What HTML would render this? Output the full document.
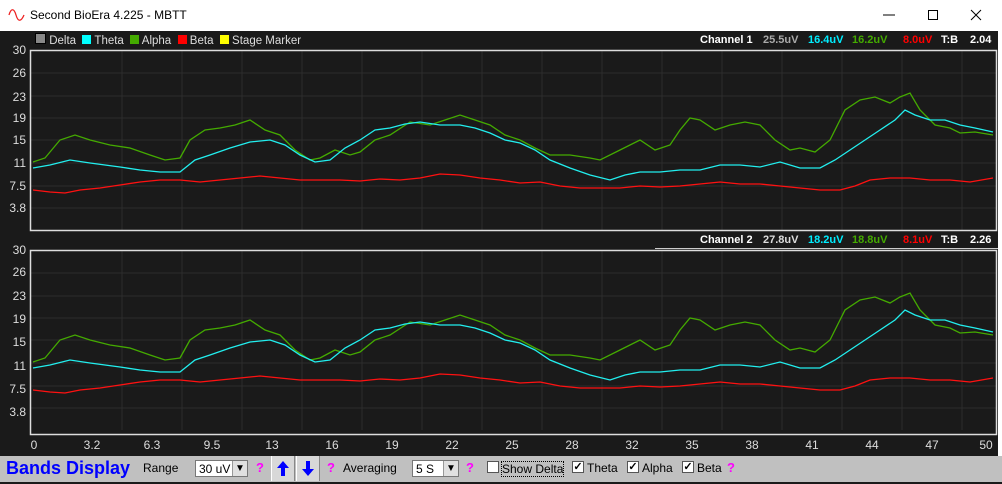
<!DOCTYPE html>
<html><head><meta charset="utf-8"><style>
body{margin:0;width:1002px;height:482px;overflow:hidden;background:#1a1a1a;font-family:"Liberation Sans",sans-serif;position:relative}
.t{position:absolute;white-space:nowrap}
.tb{position:absolute;left:0;top:0;width:1002px;height:31px;background:#fff}
.lab{color:#ddd;font-size:12px}
.yl{position:absolute;color:#ddd;font-size:12px;width:26px;text-align:right;left:0}
.hd{font-size:11px;font-weight:bold;top:0}
.bar{position:absolute;left:0;top:456px;width:1002px;height:26px;background:#c0c0c0;font-size:12px;color:#000}
.sel{position:absolute;top:4px;height:17px;background:#fff;border:1px solid #777;font-size:12px;line-height:17px;padding-left:3px;box-sizing:border-box}
.dd{position:absolute;right:0;top:0;width:14px;height:15px;background:#e0e0e0;border-left:1px solid #999;text-align:center;line-height:15px;font-size:10px}
.q{position:absolute;color:#f0f;font-weight:bold;font-size:13px;top:4px}
.cb{position:absolute;top:5px;width:12px;height:12px;background:#fff;border:1px solid #555;box-sizing:border-box;font-size:11px;line-height:10px;text-align:center;font-weight:bold}
.ab{position:absolute;top:0;width:24px;height:25px;background:#d8d8d8;border-left:1px solid #fff;border-right:1px solid #888;box-sizing:border-box}
</style></head><body>
<div class="tb">
<svg style="position:absolute;left:8px;top:8px" width="18" height="14"><path d="M1 7 C3 0,6 0,8 7 S13 14,16 7" stroke="#e22" stroke-width="1.3" fill="none"/></svg>
<div class="t" style="left:30px;top:8px;font-size:12px;color:#000">Second BioEra 4.225 - MBTT</div>
<svg style="position:absolute;left:880px;top:9px" width="110" height="14"><line x1="3" y1="6" x2="15" y2="6" stroke="#000"/><rect x="48.5" y="1.5" width="9" height="9" stroke="#000" fill="none"/><path d="M91 1 L101 11 M101 1 L91 11" stroke="#000"/></svg>
</div>
<div class="t lab" style="left:35px;top:33px;font-size:11.5px"><span style="display:inline-block;width:9px;height:9px;background:#888;border:1px solid #000"></span> Delta &nbsp;<span style="display:inline-block;width:9px;height:9px;background:#0ff"></span> Theta &nbsp;<span style="display:inline-block;width:9px;height:9px;background:#4a0"></span> Alpha &nbsp;<span style="display:inline-block;width:9px;height:9px;background:#f00"></span> Beta &nbsp;<span style="display:inline-block;width:9px;height:9px;background:#ff0"></span> Stage Marker</div>
<div class="t" style="left:0;top:34px;width:1002px;height:14px">
<span class="t hd" style="left:700px;color:#fff">Channel 1</span><span class="t hd" style="left:763px;color:#aaa">25.5uV</span><span class="t hd" style="left:808px;color:#0ef">16.4uV</span><span class="t hd" style="left:852px;color:#4a0">16.2uV</span><span class="t hd" style="left:903px;color:#f00">8.0uV</span><span class="t hd" style="left:941px;color:#fff">T:B</span><span class="t hd" style="left:970px;color:#fff">2.04</span></div>
<div class="t" style="left:0;top:234px;width:1002px;height:14px">
<span class="t hd" style="left:700px;color:#fff">Channel 2</span><span class="t hd" style="left:763px;color:#ddd">27.8uV</span><span class="t hd" style="left:808px;color:#0ef">18.2uV</span><span class="t hd" style="left:852px;color:#4a0">18.8uV</span><span class="t hd" style="left:903px;color:#f00">8.1uV</span><span class="t hd" style="left:941px;color:#fff">T:B</span><span class="t hd" style="left:970px;color:#fff">2.26</span></div>
<div style="position:absolute;left:655px;top:248px;width:343px;height:1px;background:#ccc"></div>
<div style="position:absolute;left:998px;top:30px;width:4px;height:426px;background:#fff"></div>
<div class="yl" style="top:43px">30</div><div class="yl" style="top:66px">26</div><div class="yl" style="top:90px">23</div><div class="yl" style="top:111px">19</div><div class="yl" style="top:133px">15</div><div class="yl" style="top:156px">11</div><div class="yl" style="top:179px">7.5</div><div class="yl" style="top:201px">3.8</div>
<div class="yl" style="top:243px">30</div><div class="yl" style="top:265px">26</div><div class="yl" style="top:289px">23</div><div class="yl" style="top:312px">19</div><div class="yl" style="top:335px">15</div><div class="yl" style="top:359px">11</div><div class="yl" style="top:382px">7.5</div><div class="yl" style="top:405px">3.8</div>
<svg style="position:absolute;left:0;top:0" width="1002" height="456">
<defs><g id="grid" stroke="#2c2c2c" stroke-width="1">
<path d="M92 0V180M152 0V180M212 0V180M272 0V180M332 0V180M392 0V180M452 0V180M512 0V180M572 0V180M632 0V180M692 0V180M752 0V180M812 0V180M872 0V180M932 0V180M992 0V180"/>
<path d="M0 23H966M0 46H966M0 68H966M0 90H966M0 113H966M0 136H966M0 158H966"/></g>
<g id="lines" fill="none" stroke-width="1.3">
<polyline stroke="#4a0" points="33,162 45,158 60,140 75,135 90,140 110,145 130,148 150,155 165,160 180,158 190,140 205,130 220,128 235,125 250,120 265,130 280,135 295,150 310,160 320,158 335,150 350,155 360,152 375,140 390,135 410,122 430,125 445,120 460,115 475,120 490,125 505,135 520,140 535,148 550,155 570,155 590,158 600,160 620,150 640,140 655,150 670,145 680,130 690,118 700,120 715,130 730,125 745,122 760,125 775,140 790,150 800,148 815,152 830,140 845,110 860,100 875,97 890,103 900,97 910,93 920,110 935,125 950,128 960,133 975,132 993,135"/>
<polyline stroke="#2ee" points="33,168 50,165 70,160 90,163 105,165 120,167 140,170 160,172 180,172 195,160 210,155 230,148 250,142 270,140 285,145 300,155 315,162 330,160 345,148 360,140 375,130 390,128 405,124 420,122 440,125 460,125 475,128 490,133 505,140 520,143 535,150 550,160 570,168 590,175 610,180 625,175 640,172 660,172 680,170 700,170 720,165 740,165 760,167 780,162 800,168 820,168 835,160 850,150 865,140 880,130 895,120 905,110 915,115 930,120 945,120 960,125 975,128 993,132"/>
<polyline stroke="#f11" points="33,190 50,192 65,193 80,190 100,188 120,185 140,182 160,180 180,180 200,182 220,180 240,178 260,176 280,178 300,180 320,180 340,180 360,181 380,179 400,180 420,178 440,174 460,175 480,178 500,180 520,183 540,182 560,186 580,188 600,188 620,188 640,186 660,187 680,186 700,184 720,182 740,184 760,184 780,186 800,188 820,190 840,190 855,186 870,180 890,178 910,178 930,180 950,180 970,182 993,178"/>
</g></defs>
<g transform="translate(30,50)"><use href="#grid"/></g>
<g transform="translate(30,250)"><use href="#grid"/></g>
<use href="#lines"/>
<g transform="translate(0,200)"><use href="#lines"/></g>
<rect x="30.5" y="50.5" width="966" height="180" fill="none" stroke="#ddd" stroke-width="1.5"/>
<rect x="30.5" y="250.5" width="966" height="184" fill="none" stroke="#ddd" stroke-width="1.5"/>
<g fill="#ddd" font-size="12" font-family="Liberation Sans" text-anchor="middle">
<text x="34" y="449">0</text><text x="92" y="449">3.2</text><text x="152" y="449">6.3</text><text x="212" y="449">9.5</text><text x="272" y="449">13</text><text x="332" y="449">16</text><text x="392" y="449">19</text><text x="452" y="449">22</text><text x="512" y="449">25</text><text x="572" y="449">28</text><text x="632" y="449">32</text><text x="692" y="449">35</text><text x="752" y="449">38</text><text x="812" y="449">41</text><text x="872" y="449">44</text><text x="932" y="449">47</text><text x="986" y="449">50</text></g>
</svg>
<div class="bar">
<div class="t" style="left:6px;top:2px;font-size:18px;font-weight:bold;color:#00f">Bands Display</div>
<div class="t" style="left:143px;top:5px">Range</div>
<div class="sel" style="left:195px;width:53px">30 uV<div class="dd">▼</div></div>
<div class="q" style="left:256px">?</div>
<div class="ab" style="left:271px"><svg width="22" height="25"><path d="M11 5 L5 12 H9 V20 H13 V12 H17 Z" fill="#00f"/></svg></div>
<div class="ab" style="left:296px"><svg width="22" height="25"><path d="M11 20 L5 13 H9 V5 H13 V13 H17 Z" fill="#00f"/></svg></div>
<div class="q" style="left:327px">?</div>
<div class="t" style="left:343px;top:5px">Averaging</div>
<div class="sel" style="left:412px;width:47px">5 S<div class="dd">▼</div></div>
<div class="q" style="left:466px">?</div>
<div class="cb" style="left:487px"></div>
<div class="t" style="left:501px;top:5px;border:1px dotted #000">Show Delta</div>
<div class="cb" style="left:572px">✓</div><div class="t" style="left:587px;top:5px">Theta</div>
<div class="cb" style="left:627px">✓</div><div class="t" style="left:642px;top:5px">Alpha</div>
<div class="cb" style="left:682px">✓</div><div class="t" style="left:697px;top:5px">Beta</div>
<div class="q" style="left:727px">?</div>
</div>
</body></html>
